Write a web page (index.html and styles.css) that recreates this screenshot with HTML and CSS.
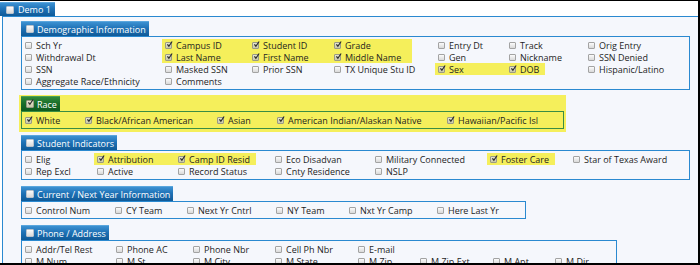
FILE: index.html
```html
<!DOCTYPE html>
<html>
<head>
<meta charset="utf-8">
<title>Demo 1</title>
<link rel="stylesheet" href="styles.css">
</head>
<body>
<div class="frame">
  <div class="tab tab-demo"><span class="cb"></span>Demo 1</div>
  <div class="demo-body">

    <section class="group g-demog">
      <div class="tab"><span class="cb"></span>Demographic Information</div>
      <div class="box">
        <div class="opt"><span class="cb"></span>Sch Yr</div>
        <div class="opt on"><span class="cb ck"><svg viewBox="0 0 8 8"><path d="M1.6 3.9 L3.3 6 L7 0.6"/></svg></span>Campus ID</div>
        <div class="opt on"><span class="cb ck"><svg viewBox="0 0 8 8"><path d="M1.6 3.9 L3.3 6 L7 0.6"/></svg></span>Student ID</div>
        <div class="opt on"><span class="cb ck"><svg viewBox="0 0 8 8"><path d="M1.6 3.9 L3.3 6 L7 0.6"/></svg></span>Grade</div>
        <div class="opt"><span class="cb"></span>Entry Dt</div>
        <div class="opt"><span class="cb"></span>Track</div>
        <div class="opt"><span class="cb"></span>Orig Entry</div>

        <div class="opt"><span class="cb"></span>Withdrawal Dt</div>
        <div class="opt on"><span class="cb ck"><svg viewBox="0 0 8 8"><path d="M1.6 3.9 L3.3 6 L7 0.6"/></svg></span>Last Name</div>
        <div class="opt on"><span class="cb ck"><svg viewBox="0 0 8 8"><path d="M1.6 3.9 L3.3 6 L7 0.6"/></svg></span>First Name</div>
        <div class="opt on"><span class="cb ck"><svg viewBox="0 0 8 8"><path d="M1.6 3.9 L3.3 6 L7 0.6"/></svg></span>Middle Name</div>
        <div class="opt"><span class="cb"></span>Gen</div>
        <div class="opt"><span class="cb"></span>Nickname</div>
        <div class="opt"><span class="cb"></span>SSN Denied</div>

        <div class="opt"><span class="cb"></span>SSN</div>
        <div class="opt"><span class="cb"></span>Masked SSN</div>
        <div class="opt"><span class="cb"></span>Prior SSN</div>
        <div class="opt"><span class="cb"></span>TX Unique Stu ID</div>
        <div class="opt on"><span class="cb ck"><svg viewBox="0 0 8 8"><path d="M1.6 3.9 L3.3 6 L7 0.6"/></svg></span>Sex</div>
        <div class="opt on end"><span class="cb ck"><svg viewBox="0 0 8 8"><path d="M1.6 3.9 L3.3 6 L7 0.6"/></svg></span>DOB</div>
        <div class="opt"><span class="cb"></span>Hispanic/Latino</div>

        <div class="opt"><span class="cb"></span>Aggregate Race/Ethnicity</div>
        <div class="opt"><span class="cb"></span>Comments</div>
      </div>
    </section>

    <section class="group g-race sel">
      <div class="tab tab-green"><span class="cb ck"><svg viewBox="0 0 8 8"><path d="M1.6 3.9 L3.3 6 L7 0.6"/></svg></span>Race</div>
      <div class="box box-green">
        <div class="opt"><span class="cb ck"><svg viewBox="0 0 8 8"><path d="M1.6 3.9 L3.3 6 L7 0.6"/></svg></span>White</div>
        <div class="opt"><span class="cb ck"><svg viewBox="0 0 8 8"><path d="M1.6 3.9 L3.3 6 L7 0.6"/></svg></span>Black/African American</div>
        <div class="opt"><span class="cb ck"><svg viewBox="0 0 8 8"><path d="M1.6 3.9 L3.3 6 L7 0.6"/></svg></span>Asian</div>
        <div class="opt"><span class="cb ck"><svg viewBox="0 0 8 8"><path d="M1.6 3.9 L3.3 6 L7 0.6"/></svg></span>American Indian/Alaskan Native</div>
        <div class="opt"><span class="cb ck"><svg viewBox="0 0 8 8"><path d="M1.6 3.9 L3.3 6 L7 0.6"/></svg></span>Hawaiian/Pacific Isl</div>
      </div>
    </section>

    <section class="group g-ind">
      <div class="tab"><span class="cb"></span>Student Indicators</div>
      <div class="box">
        <div class="opt"><span class="cb"></span>Elig</div>
        <div class="opt on"><span class="cb ck"><svg viewBox="0 0 8 8"><path d="M1.6 3.9 L3.3 6 L7 0.6"/></svg></span>Attribution</div>
        <div class="opt on end"><span class="cb ck"><svg viewBox="0 0 8 8"><path d="M1.6 3.9 L3.3 6 L7 0.6"/></svg></span>Camp ID Resid</div>
        <div class="opt"><span class="cb"></span>Eco Disadvan</div>
        <div class="opt"><span class="cb"></span>Military Connected</div>
        <div class="opt on end"><span class="cb ck"><svg viewBox="0 0 8 8"><path d="M1.6 3.9 L3.3 6 L7 0.6"/></svg></span>Foster Care</div>
        <div class="opt"><span class="cb"></span>Star of Texas Award</div>

        <div class="opt"><span class="cb"></span>Rep Excl</div>
        <div class="opt"><span class="cb"></span>Active</div>
        <div class="opt"><span class="cb"></span>Record Status</div>
        <div class="opt"><span class="cb"></span>Cnty Residence</div>
        <div class="opt"><span class="cb"></span>NSLP</div>
      </div>
    </section>

    <section class="group g-year">
      <div class="tab"><span class="cb"></span>Current / Next Year Information</div>
      <div class="box">
        <div class="opt"><span class="cb"></span>Control Num</div>
        <div class="opt"><span class="cb"></span>CY Team</div>
        <div class="opt"><span class="cb"></span>Next Yr Cntrl</div>
        <div class="opt"><span class="cb"></span>NY Team</div>
        <div class="opt"><span class="cb"></span>Nxt Yr Camp</div>
        <div class="opt"><span class="cb"></span>Here Last Yr</div>
      </div>
    </section>

    <section class="group g-phone">
      <div class="tab"><span class="cb"></span>Phone / Address</div>
      <div class="box">
        <div class="opt"><span class="cb"></span>Addr/Tel Rest</div>
        <div class="opt"><span class="cb"></span>Phone AC</div>
        <div class="opt"><span class="cb"></span>Phone Nbr</div>
        <div class="opt"><span class="cb"></span>Cell Ph Nbr</div>
        <div class="opt"><span class="cb"></span>E-mail</div>
        <div class="opt blank"></div>
        <div class="opt blank"></div>
        <div class="opt blank"></div>

        <div class="opt"><span class="cb"></span>M Num</div>
        <div class="opt"><span class="cb"></span>M St</div>
        <div class="opt"><span class="cb"></span>M City</div>
        <div class="opt"><span class="cb"></span>M State</div>
        <div class="opt"><span class="cb"></span>M Zip</div>
        <div class="opt"><span class="cb"></span>M Zip Ext</div>
        <div class="opt"><span class="cb"></span>M Apt</div>
        <div class="opt"><span class="cb"></span>M Dir</div>
      </div>
    </section>

  </div>
</div>
</body>
</html>
```

FILE: styles.css
```css
html, body {
  margin: 0;
  padding: 0;
  background: #ffffff;
}

body {
  font-family: "Open Sans", "Noto Sans", "Liberation Sans", sans-serif;
  font-size: 9px;
  color: #1e1e1e;
}

.frame {
  box-sizing: border-box;
  width: 700px;
  height: 265px;
  border-top: 1px solid #000;
  border-right: 2px solid #000;
  border-bottom: 2px solid #000;
  overflow: hidden;
  display: flex;
  flex-direction: column;
  background: #ffffff;
}

/* ---------- tabs ---------- */
.tab {
  box-sizing: border-box;
  width: max-content;
  height: 15px;
  padding: 0 3px 0 5px;
  display: flex;
  align-items: center;
  color: #ffffff;
  white-space: nowrap;
  background: linear-gradient(#3c91d2 0%, #1f72b6 45%, #0f5a98 100%);
  border-top: 1px solid #5aa6dd;
}

.tab .cb {
  width: 8px;
  height: 8px;
  margin-right: 3px;
  border-color: #b9c2cc;
}

.tab-demo {
  height: 17px;
  margin-top: 1px;
  padding: 0 4px 0 6px;
}

.tab-demo .cb {
  margin-right: 4px;
}

.tab-green {
  background: linear-gradient(#2f8a3b 0%, #1b6e2a 45%, #0e5a1f 100%);
  border-top-color: #4a9f55;
}

/* ---------- outer demo panel ---------- */
.demo-body {
  flex: 1;
  margin-left: 2px;
  border-left: 1px solid #2a89d0;
  border-top: 1px solid #2a89d0;
  padding: 3px 0 0 16px;
  background: #f5f7fc;
  display: flex;
  flex-direction: column;
  gap: 2px;
}

/* ---------- groups ---------- */
.group {
  width: max-content;
  padding: 1px 2px 3px 2px;
}

.group.sel {
  background: #f5ef5b;
}

.box {
  display: grid;
  padding: 2px 0;
  border: 1px solid #2a89d0;
}

.box-green {
  border-color: #3a8d44;
}

.g-demog .box {
  grid-template-columns: 140px 87px 82px 81px 94px 79px 104px;
}

.g-demog .opt:nth-child(7n+5) {
  margin-left: 23px;
}

.g-race .box {
  grid-template-columns: 60px 132px 60px 170px 119px;
}

.g-ind .box {
  grid-template-columns: 72px 81px 97px 100px 115px 83px 119px;
}

.g-year .box {
  grid-template-columns: 90px 72px 89px 73px 88px 91px;
}

.g-phone .box {
  grid-template-columns: 91px 77px 82px 83px 62px 73px 62px 64px;
}

/* ---------- options ---------- */
.opt {
  height: 12px;
  padding-left: 3px;
  display: flex;
  align-items: center;
  white-space: nowrap;
}

.opt.on {
  background: #f5ef5b;
}

.opt.end {
  justify-self: start;
  padding-right: 6px;
}

/* ---------- checkbox ---------- */
.cb {
  box-sizing: border-box;
  flex: none;
  position: relative;
  width: 7px;
  height: 7px;
  margin-right: 4px;
  border: 1px solid #a3a3a3;
  border-radius: 1px;
  background: linear-gradient(#fbfbfb, #d9d9d9);
}

.cb.ck {
  background: linear-gradient(#e6e6cf, #c9c9a8);
  border-color: #9a9a86;
}

.cb svg {
  position: absolute;
  left: 0;
  top: -2px;
  width: 7px;
  height: 7px;
  overflow: visible;
}

.cb svg path {
  fill: none;
  stroke: #2b2b2b;
  stroke-width: 1.4;
}
```
